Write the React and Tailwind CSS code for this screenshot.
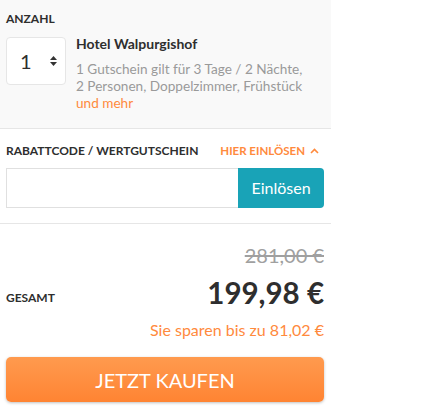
export default function App() {
  return (
    <div className="w-[424px] h-[409px] bg-white" style={{ fontFamily: "Lato, 'Liberation Sans', sans-serif" }}>
      <div className="w-[331px]">
        <div className="bg-[#f9f9f9] border-b border-[#e6e6e6] pl-[6px] pr-[7px] pt-[12px] h-[129px]">
          <div className="text-[12px] font-bold text-[#2e2e2e] leading-[14px]">ANZAHL</div>
          <div className="flex mt-[11px]">
            <div className="w-[60px] h-[48px] bg-white border border-[#e6e6e6] rounded-[4px] flex items-center pl-[13px] shrink-0">
              <span className="text-[20px] text-[#2e2e2e] leading-none">1</span>
              <svg className="ml-[18px]" width="7" height="10" viewBox="0 0 7 10">
                <path d="M3.5 0 L7 4 H0 Z" fill="#333" />
                <path d="M3.5 10 L7 6 H0 Z" fill="#333" />
              </svg>
            </div>
            <div className="ml-[10px]">
              <div className="text-[14px] font-bold text-[#2e2e2e] leading-[16px] mt-[-1px]">Hotel Walpurgishof</div>
              <div className="text-[13.6px] text-[#9a9a9a] leading-[16.5px] mt-[9px]">
                1 Gutschein gilt für 3 Tage / 2 Nächte,
                <br />
                2 Personen, Doppelzimmer, Frühstück
              </div>
              <div className="text-[13.6px] text-[#ff8a3d] leading-[16.5px] mt-[1px]">und mehr</div>
            </div>
          </div>
        </div>
        <div className="border-b border-[#e6e6e6] pl-[6px] pr-[7px] pt-[15px] h-[95px]">
          <div className="flex items-center justify-between">
            <span className="text-[12px] font-bold text-[#2e2e2e] leading-[14px]">RABATTCODE / WERTGUTSCHEIN</span>
            <span className="flex items-center text-[11.5px] font-bold text-[#ff8a3d] leading-[14px] mr-[5px]">
              HIER EINLÖSEN
              <svg className="ml-[5px]" width="9" height="6" viewBox="0 0 9 6">
                <path d="M1 5 L4.5 1.5 L8 5" stroke="#ff8a3d" strokeWidth="1.6" fill="none" />
              </svg>
            </span>
          </div>
          <div className="flex mt-[10px] h-[40px]">
            <div className="flex-1 border border-[#e0e0e0] border-r-0 bg-white" />
            <button className="w-[86px] bg-[#19a3b7] text-white text-[16px] rounded-r-[4px]">Einlösen</button>
          </div>
        </div>
        <div className="pl-[6px] pr-[7px] pt-[19px]">
          <div className="text-right text-[20px] text-[#a0a0a0] line-through leading-[24px]">281,00 €</div>
          <div className="flex items-end justify-between mt-[9px]">
            <span className="text-[12px] font-bold text-[#2e2e2e] leading-[14px] mb-[5px]">GESAMT</span>
            <span className="text-[29.5px] font-bold text-[#2e2e2e] leading-[34px]">199,98 €</span>
          </div>
          <div className="text-right text-[16px] text-[#ff8a3d] leading-[20px] mt-[10px]">Sie sparen bis zu 81,02 €</div>
          <button className="mt-[17px] w-full h-[45px] rounded-[5px] bg-gradient-to-b from-[#ff9a4e] to-[#ff8432] text-white text-[20px] shadow-[0_1px_3px_rgba(0,0,0,0.25)]">JETZT KAUFEN</button>
        </div>
      </div>
    </div>
  );
}
